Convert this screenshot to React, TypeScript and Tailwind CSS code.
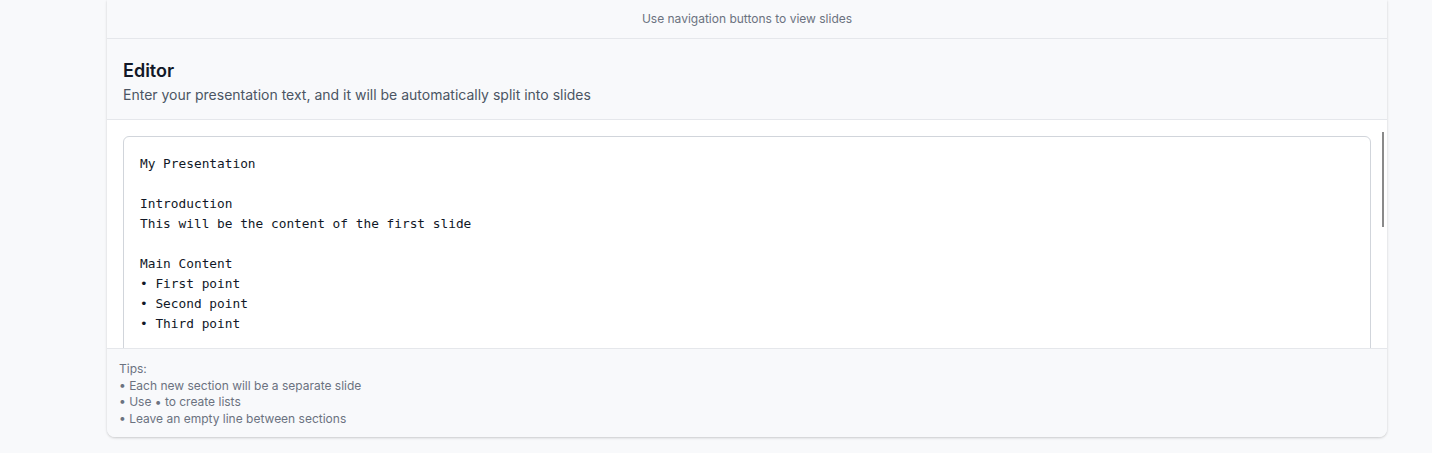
import React from "react";

const text = `My Presentation

Introduction
This will be the content of the first slide

Main Content
• First point
• Second point
• Third point

Conclusion
Thank you for your attention`;

export default function App() {
  return (
    <div
      className="min-h-[453px] w-full bg-[#f8f9fb] overflow-hidden"
      style={{ fontFamily: "Inter, 'Noto Sans', sans-serif" }}
    >
      <div className="ml-[107px] w-[1280px] h-[437px] flex flex-col overflow-hidden rounded-b-lg bg-[#f8f9fb] shadow-[0_1px_3px_rgba(0,0,0,0.14),0_1px_2px_rgba(0,0,0,0.06)]">
        <div className="h-[39px] shrink-0 flex items-center justify-center border-b border-[#e5e7eb] text-xs text-[#6b7280]">
          Use navigation buttons to view slides
        </div>
        <div className="shrink-0 px-4 pt-[18px] pb-[14px] border-b border-[#e5e7eb]">
          <h2 className="text-lg leading-7 font-semibold text-[#111827]">Editor</h2>
          <p className="text-sm leading-5 text-[#4b5563]">
            Enter your presentation text, and it will be automatically split into slides
          </p>
        </div>
        <div className="relative h-[228px] shrink-0 overflow-hidden bg-white px-4 pt-4">
          <textarea
            readOnly
            value={text}
            className="block w-full h-[400px] resize-none rounded-md border border-[#d1d5db] bg-white px-4 pt-[17px] pb-4 text-[12.8px] leading-5 text-[#111827] outline-none overflow-hidden"
            style={{ fontFamily: "'DejaVu Sans Mono', 'Liberation Mono', monospace" }}
          />
          <div className="absolute right-[3px] top-[12px] h-[95px] w-[2px] bg-[#8a8a8a]" />
        </div>
        <div className="flex-1 border-t border-[#e5e7eb] bg-[#f8f9fb] px-3 pt-3 text-xs leading-[16.5px] text-[#6b7280]">
          <div>Tips:</div>
          <div>• Each new section will be a separate slide</div>
          <div>• Use • to create lists</div>
          <div>• Leave an empty line between sections</div>
        </div>
      </div>
    </div>
  );
}
